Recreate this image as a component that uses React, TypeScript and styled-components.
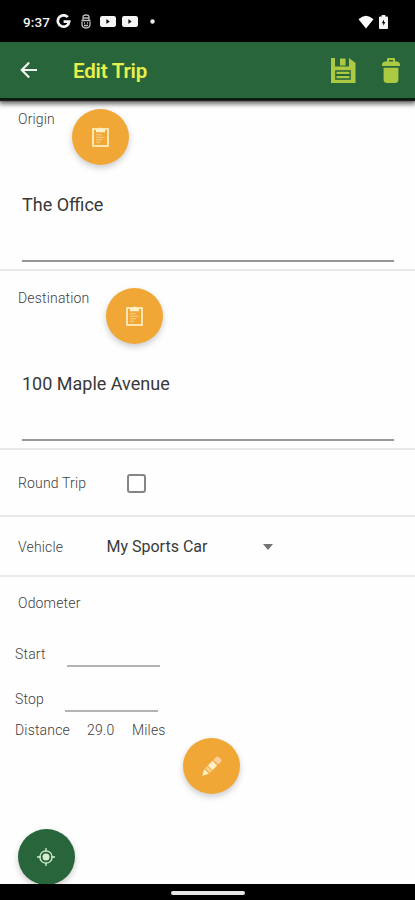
import React from "react";
import styled, { createGlobalStyle } from "styled-components";

const GlobalStyle = createGlobalStyle`
  * { box-sizing: border-box; }
  body { margin: 0; background: #fefefe; font-family: Roboto, "Liberation Sans", sans-serif; }
`;

const Screen = styled.div`
  width: 415px;
  height: 900px;
  overflow: hidden;
  display: flex;
  flex-direction: column;
  background: #fefefe;
  svg { display: block; flex: none; }
`;

const StatusBar = styled.header`
  flex: none;
  height: 42px;
  display: flex;
  align-items: center;
  padding: 1px 27px 0 23px;
  background: #000;
  color: #f4f4f4;
`;

const Clock = styled.span`
  width: 33px;
  font: 500 13.5px/20px Roboto, sans-serif;
  letter-spacing: 0.1px;
`;

const Notifications = styled.div`
  flex: 1;
  display: flex;
  align-items: center;
`;

const Indicators = styled.div`
  display: flex;
  align-items: center;
  gap: 5px;
`;

const AppBar = styled.nav`
  flex: none;
  position: relative;
  z-index: 1;
  height: 58px;
  display: flex;
  align-items: center;
  padding: 0 15px 0 20px;
  background: #29653a;
  border-bottom: 2px solid #0d1a10;
  box-shadow: 0 1px 1px #222, 0 3px 5px 1px rgba(0, 0, 0, 0.6);
`;

const Title = styled.h1`
  flex: 1;
  margin: 2px 0 0 35px;
  color: #e9f04b;
  font: 600 20.5px/28px Roboto, sans-serif;
  letter-spacing: -0.2px;
`;

const Actions = styled.div`
  display: flex;
  align-items: center;
  gap: 26px;
`;

const Content = styled.main`
  flex: 1;
  min-height: 0;
  overflow: hidden;
  display: flex;
  flex-direction: column;
`;

const Divided = styled.section`
  flex: none;
  border-bottom: 2px solid #e9e9e9;
`;

const Place = styled(Divided)<{ $height: number; $top: number }>`
  height: ${(p) => p.$height}px;
  padding: ${(p) => p.$top}px 21px 0 18px;
`;

const Label = styled.span<{ $width?: number }>`
  width: ${(p) => (p.$width ? `${p.$width}px` : "auto")};
  flex: none;
  white-space: nowrap;
  color: #404040;
  font: 300 14px/18px Roboto, sans-serif;
  letter-spacing: 0.17px;
`;

const PlaceHead = styled.div`
  display: flex;
  align-items: flex-start;
  gap: 17px;
  ${Label} { margin-top: 1px; }
`;

const Fab = styled.button<{ $green?: boolean }>`
  flex: none;
  width: 57px;
  height: 56px;
  padding: 0;
  border: 0;
  border-radius: 50%;
  display: flex;
  align-items: center;
  justify-content: center;
  background: ${(p) => (p.$green ? "#29653a" : "#f1a736")};
  box-shadow: 0 3px 6px rgba(0, 0, 0, 0.2);
`;

const PlaceField = styled.div`
  height: 84px;
  margin: 13px 0 0 4px;
  padding-top: 16px;
  border-bottom: 2px solid #979797;
  color: #383838;
  font: 400 18px/22px Roboto, sans-serif;
  letter-spacing: 0;
`;

const OptionRow = styled(Divided)<{ $height: number; $top: number }>`
  height: ${(p) => p.$height}px;
  display: flex;
  align-items: center;
  padding: ${(p) => p.$top}px 0 0 18px;
`;

const Checkbox = styled.span`
  width: 19px;
  height: 19px;
  border: 2px solid #858585;
  border-radius: 3px;
`;

const Select = styled.div`
  width: 166px;
  display: flex;
  align-items: center;
  justify-content: space-between;
  color: #3a3a3a;
  font: 400 16px/20px Roboto, sans-serif;
  letter-spacing: 0;
`;

const Odometer = styled.section`
  flex: 1;
  padding: 17px 15px 0;
  display: flex;
  flex-direction: column;
  align-items: flex-start;
`;

const SectionName = styled.div`
  padding-left: 3px;
  height: 18px;
  line-height: 0;
`;

const Reading = styled.div<{ $top: number; $gap: number }>`
  margin-top: ${(p) => p.$top}px;
  height: 22px;
  display: flex;
  align-items: flex-start;
  gap: ${(p) => p.$gap}px;
`;

const Blank = styled.span`
  width: 93px;
  height: 22px;
  border-bottom: 2px solid #b3b3b3;
`;

const Distance = styled.div`
  height: 18px;
  margin-top: 9px;
  display: flex;
`;

const EditRow = styled.div`
  margin: -1px 0 0 168px;
`;

const LocateRow = styled.div`
  margin: 35px 0 0 2.5px;
`;

const NavBar = styled.footer`
  flex: none;
  position: relative;
  z-index: 1;
  height: 16px;
  display: flex;
  justify-content: center;
  padding-top: 7px;
  background: #000;
`;

const Handle = styled.span`
  width: 74px;
  height: 4px;
  border-radius: 2px;
  background: #e8e8e8;
`;

const GoogleIcon = () => (
  <svg width="15" height="15" viewBox="0 0 15 15" fill="none" stroke="#f4f4f4" strokeWidth="2.7">
    <path d="M11.8 3.2A5.7 5.7 0 1 0 13.2 7.6H7.6" />
  </svg>
);

const FaceIcon = () => (
  <svg width="10" height="15" viewBox="0 0 10 15" fill="none" stroke="#bdbdbd" strokeWidth="1.3">
    <path d="M2 6V3Q2 1 5 1T8 3v3M.5 6.5h9M2 4h6" />
    <path d="M1 7.5v2.8Q1 14 5 14t4-3.7V7.5M3 9h1M6 9h1M3 11.5h4" />
  </svg>
);

const VideoIcon = () => (
  <svg width="16" height="11" viewBox="0 0 16 11">
    <rect width="16" height="11" rx="2.2" fill="#f4f4f4" />
    <path d="M6.6 3.6v3.8l2.8-1.9z" fill="#000" stroke="#000" strokeWidth=".4" />
  </svg>
);

const DotIcon = () => (
  <svg width="5" height="5" viewBox="0 0 5 5"><circle cx="2.5" cy="2.5" r="2.2" fill="#eee" /></svg>
);

const WifiIcon = () => (
  <svg width="16" height="14" viewBox="0 0 16 14"><path d="M.5 4.3Q8-2.8 15.5 4.3L8 13.5z" fill="#fff" /></svg>
);

const BatteryIcon = () => (
  <svg width="9" height="14" viewBox="0 0 9 14">
    <path d="M2.7 0h3.6v1.5H8q1 0 1 1V13q0 1-1 1H1q-1 0-1-1V2.5q0-1 1-1h1.7z" fill="#f4f4f4" />
    <path d="M5 4.5 2.8 8.2h1.5v2.6l2-3.7H5z" fill="#000" />
  </svg>
);

const BackIcon = () => (
  <svg width="18" height="18" viewBox="0 0 18 18" fill="none" stroke="#f0f5f1" strokeWidth="2.2">
    <path d="M17 9H2.2M9.2 1.5 1.8 9l7.4 7.5" />
  </svg>
);

const SaveIcon = () => (
  <svg width="25" height="25" viewBox="0 0 25 25">
    <path d="M0 0h4v8.5h14V0l6.5 5v20H0z" fill="#abc942" />
    <path d="M9 0.5h5.5V7.5H9z" fill="#abc942" />
    <path d="M4.2 12.2h15.6v9.6H4.2z" fill="#29653a" />
    <path d="M5.5 13.8h13v2.2h-13zm0 4.2h13v2.2h-13z" fill="#abc942" />
  </svg>
);

const TrashIcon = () => (
  <svg width="18" height="25" viewBox="0 0 18 25">
    <path d="M0 8V6.3q0-2 2.2-2.5L5 3.3V1q0-1 1-1h6q1 0 1 1v2.3l2.8.5Q18 4.300 18 6.3V8z" fill="#abc942" />
    <path d="M7 2h4v1.5H7z" fill="#29653a" />
    <path d="M1.6 9.7h14.8v11.8q0 3.5-3.5 3.5H5.1q-3.5 0-3.5-3.5z" fill="#abc942" />
  </svg>
);

const ClipboardIcon = () => (
  <svg width="17" height="20" viewBox="0 0 17 20" fill="none">
    <rect x="1" y="2" width="15" height="17" stroke="#fff0c5" strokeWidth="1.7" />
    <path d="M4 2.2h2.6Q8.5-1 10.4 2.2H13v3H4z" fill="#fff0c5" />
    <path d="M4 7.8h6M4 10.3h8.5M4 12.8h6M4 15.2h4" stroke="#f9d391" strokeWidth="1.1" />
  </svg>
);

const PencilIcon = () => (
  <svg width="20" height="20" viewBox="0 0 20 20">
    <path d="m.3 19.7 1.9-6.6 4.7 4.7z" fill="#fff0c8" />
    <path d="m3 12.3 2.2-2.2 4.7 4.7L7.7 17z" fill="#f8d18a" />
    <path d="m5.8 9.5 4.7-4.7 4.7 4.7-4.7 4.7z" fill="#fff0c8" />
    <path d="M11.4 3.9 14.2 1q1.3-1 2.6 0L19 3.2q1 1.3 0 2.6l-2.9 2.8z" fill="#ffcf9b" />
  </svg>
);

const LocateIcon = () => (
  <svg width="18" height="18" viewBox="0 0 19 19" fill="none" stroke="#d3edcf" strokeWidth="1.4">
    <circle cx="9.5" cy="9.5" r="6.5" />
    <path d="M9.5 0v4M9.500 15v4M0 9.5h4M15 9.5h4" />
    <circle cx="9.5" cy="9.5" r="3.7" fill="#d3edcf" stroke="none" />
  </svg>
);

const CaretIcon = () => (
  <svg width="10" height="6" viewBox="0 0 10 6"><path d="M0 0h10L5 6z" fill="#737373" /></svg>
);

const NotificationIcons = styled(Notifications)`
  svg:nth-child(2) { margin-left: 10px; }
  svg:nth-child(3) { margin-left: 9px; }
  svg:nth-child(4) { margin-left: 6px; }
  svg:nth-child(5) { margin-left: 12px; }
`;

export default function App() {
  return (
    <Screen>
      <GlobalStyle />
      <StatusBar>
        <Clock>9:37</Clock>
        <NotificationIcons>
          <GoogleIcon />
          <FaceIcon />
          <VideoIcon />
          <VideoIcon />
          <DotIcon />
        </NotificationIcons>
        <Indicators>
          <WifiIcon />
          <BatteryIcon />
        </Indicators>
      </StatusBar>
      <AppBar>
        <BackIcon />
        <Title>Edit Trip</Title>
        <Actions>
          <SaveIcon />
          <TrashIcon />
        </Actions>
      </AppBar>
      <Content>
        <Place $height={171} $top={9}>
          <PlaceHead>
            <Label>Origin</Label>
            <Fab aria-label="Choose origin"><ClipboardIcon /></Fab>
          </PlaceHead>
          <PlaceField>The Office</PlaceField>
        </Place>
        <Place $height={179} $top={17}>
          <PlaceHead>
            <Label>Destination</Label>
            <Fab aria-label="Choose destination"><ClipboardIcon /></Fab>
          </PlaceHead>
          <PlaceField>100 Maple Avenue</PlaceField>
        </Place>
        <OptionRow $height={67} $top={1}>
          <Label $width={109}>Round Trip</Label>
          <Checkbox />
        </OptionRow>
        <OptionRow $height={60} $top={2}>
          <Label $width={88.5}>Vehicle</Label>
          <Select>
            My Sports Car
            <CaretIcon />
          </Select>
        </OptionRow>
        <Odometer>
          <SectionName><Label>Odometer</Label></SectionName>
          <Reading $top={33} $gap={21}>
            <Label>Start</Label>
            <Blank />
          </Reading>
          <Reading $top={23} $gap={21}>
            <Label>Stop</Label>
            <Blank />
          </Reading>
          <Distance>
            <Label $width={72}>Distance</Label>
            <Label $width={45}>29.0</Label>
            <Label>Miles</Label>
          </Distance>
          <EditRow>
            <Fab aria-label="Edit distance"><PencilIcon /></Fab>
          </EditRow>
          <LocateRow>
            <Fab $green aria-label="Use current location"><LocateIcon /></Fab>
          </LocateRow>
        </Odometer>
      </Content>
      <NavBar><Handle /></NavBar>
    </Screen>
  );
}
